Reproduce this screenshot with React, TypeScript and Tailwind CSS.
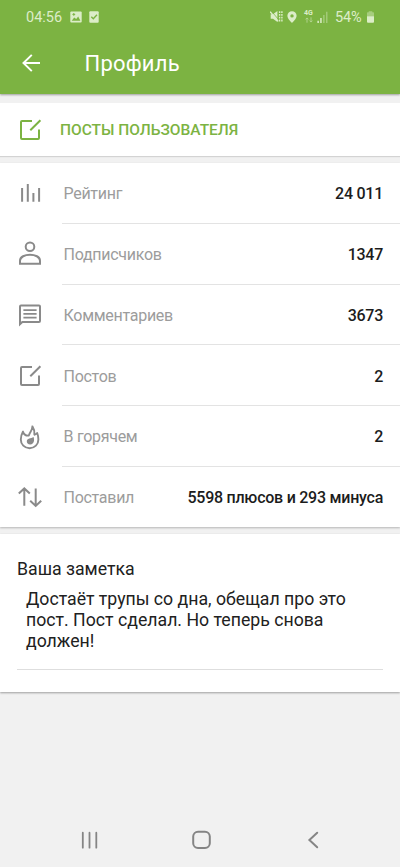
import type { ReactNode } from "react";

function Icon({ children }: { children: ReactNode }) {
  return (
    <svg
      className="h-7 w-7 shrink-0"
      viewBox="0 0 28 28"
      fill="none"
      stroke="currentColor"
      strokeWidth="2"
    >
      {children}
    </svg>
  );
}

const EditIcon = () => (
  <Icon>
    <path d="M16 5H6Q5 5 5 6v16q0 1 1 1h16q1 0 1-1v-8.6M24.4 4.2 14.3 14.2" />
  </Icon>
);

const BarsIcon = () => (
  <Icon>
    <path d="M6.1 9v13.7M11.8 5v17.7M17.4 14v8.7M23.1 9v13.7" />
  </Icon>
);

const PersonIcon = () => (
  <Icon>
    <circle cx="14" cy="6.8" r="4.3" />
    <path d="M4 23.7v-2.9c0-4 5-6.1 10-6.1s10 2.1 10 6.1v2.9z" />
  </Icon>
);

const CommentIcon = () => (
  <Icon>
    <path d="M4 23.2V5.6Q4 4.6 5 4.6h18q1 0 1 1V20q0 1-1 1H6.3z" />
    <path d="M7.4 9.2h13.2M7.4 12.9h13.2M7.4 16.6h13.2" strokeWidth="1.8" />
  </Icon>
);

const FireIcon = () => (
  <Icon>
    <path
      d="M16.4 3.4c0 4-2.6 5.4-3.6 9.2-2.6.2-5-1.200-5.900-4C5.400 11.500 4.800 14.200 4.800 16.500c0 4.900 3.700 8.700 8.800 8.700s8.800-3.800 8.800-8.700c0-2.500-.4-4.500-1.200-6.500-.8 1-1.700 1.500-2.800 1.700.2-3-.3-5.800-2-8.300z"
      strokeLinejoin="round"
      strokeWidth="1.9"
    />
    <path
      d="M17.6 14c1 3.300.5 7.200-3.200 7.400-2.300.1-3.700-1.200-3.600-3.100.1-3.100 4.200-2.600 6.800-4.300z"
      fill="currentColor"
      stroke="none"
    />
  </Icon>
);

const ArrowsIcon = () => (
  <Icon>
    <path d="M8.3 22.8V5.8M2.8 10.6l5.5-5.2 5.5 5.2M19.7 5.5v17M14.2 17.7l5.5 5.2 5.5-5.2" />
  </Icon>
);

const stats = [
  { icon: <BarsIcon />, label: "Рейтинг", value: "24 011" },
  { icon: <PersonIcon />, label: "Подписчиков", value: "1347" },
  { icon: <CommentIcon />, label: "Комментариев", value: "3673" },
  { icon: <EditIcon />, label: "Постов", value: "2" },
  { icon: <FireIcon />, label: "В горячем", value: "2" },
  { icon: <ArrowsIcon />, label: "Поставил", value: "5598 плюсов и 293 минуса" },
];

function StatusBar() {
  return (
    <div className="flex h-[33px] items-center pl-[26px] pr-[25px] text-[14.5px] text-[#dcedc8]">
      <span className="pt-[2px]">04:56</span>
      <svg className="ml-[8px] h-3 w-3" viewBox="0 0 12 12">
        <rect x=".3" y=".5" width="11.4" height="11" rx="1" fill="currentColor" />
        <path d="M1.7 9.7 4.2 6.5l2 1.6 2-2.7 2.2 4.3z" fill="#7cb342" />
        <path d="M3.8 2v2.8M2.4 3.4h2.8" stroke="#7cb342" />
      </svg>
      <svg className="ml-[6px] h-3 w-3" viewBox="0 0 12 12">
        <rect x="1.3" y=".2" width="9.4" height="11.6" rx="1" fill="currentColor" />
        <path d="m3.3 5.8 2 2 3.7-4" fill="none" stroke="#7cb342" strokeWidth="1.4" />
      </svg>
      <div className="ml-auto flex items-center">
        <svg className="h-[13px] w-[13px]" viewBox="0 0 13 13" fill="none" stroke="currentColor">
          <path d="M.7 4.2h2.2L7.4 1v11L3 8.7H.7z" fill="currentColor" stroke="none" />
          <path d="m1.2 1 7.6 8.8" stroke="#7cb342" strokeWidth=".8" />
          <path d="m.2 1.7 8 9.6" strokeWidth="1.3" />
          <path d="M9.6 1.2v11M11.9 1.2v11" strokeWidth="1.4" strokeDasharray="1.8 1" />
        </svg>
        <svg className="ml-1 h-3 w-[10px]" viewBox="0 0 10 12">
          <path
            d="M5 .2A4.6 4.6 0 0 0 .4 4.8C.4 8 5 12 5 12s4.6-4 4.6-7.2A4.6 4.6 0 0 0 5 .2zm0 3a1.7 1.7 0 1 1 0 3.4 1.7 1.7 0 0 1 0-3.4z"
            fill="currentColor"
          />
        </svg>
        <div className="ml-[7px] flex w-[9px] flex-col items-center">
          <span className="text-[7px] font-bold leading-[7px]">4G</span>
          <svg className="h-[6px] w-2 opacity-60" viewBox="0 0 8 6" fill="none" stroke="currentColor" strokeWidth=".9">
            <path d="M2 5.7V1M.5 2.4 2 .9l1.5 1.5M6 .3V5M4.5 3.6 6 5.1l1.5-1.5" />
          </svg>
        </div>
        <svg className="ml-1 h-3 w-[11px]" viewBox="0 0 11 12" fill="currentColor">
          <path d="M.4 9.8h1.5V12H.4zM3.2 7h1.5v5H3.2z" />
          <path d="M6.1 4h1.5v8H6.1zM9 .8h1.5V12H9z" opacity=".4" />
        </svg>
        <span className="ml-[7px] w-[28px] pt-[2px] tracking-[-0.2px]">54%</span>
        <svg className="ml-[3px] h-3 w-[9px]" viewBox="0 0 9 12" fill="currentColor">
          <path d="M1 5.5V2q0-.7.7-.7h1V.3h3.6v1h1q.7 0 .7.7v3.5z" opacity=".45" />
          <path d="M1 5.2h7v5.5q0 1-1 1H2q-1 0-1-1z" />
        </svg>
      </div>
    </div>
  );
}

export default function App() {
  return (
    <div className="flex h-[867px] w-[400px] flex-col overflow-hidden bg-[#f1f1f1] font-[Roboto,sans-serif]">
      <header className="h-[94px] shrink-0 bg-[#7cb342] shadow-[0_1px_2px_rgba(0,0,0,0.35)]">
        <StatusBar />
        <div className="flex h-[60px] items-center pl-[21px] text-white">
          <svg className="h-5 w-5" viewBox="0 0 20 20" fill="none" stroke="currentColor" strokeWidth="2">
            <path d="M19 10H2.5M10.8 1.9 2.5 10l8.3 8.1" />
          </svg>
          <h1 className="ml-[43.5px] pt-px text-[22px] leading-[30px] tracking-[0.2px]">Профиль</h1>
        </div>
      </header>

      <section className="mt-[9px] flex h-[53px] shrink-0 items-center bg-white pl-4 text-[#7cb342] shadow-[0_1px_1px_rgba(0,0,0,0.12)]">
        <EditIcon />
        <span className="ml-4 pt-[2px] text-[15.5px] font-medium">ПОСТЫ ПОЛЬЗОВАТЕЛЯ</span>
      </section>

      <section className="mt-[7px] h-[364px] shrink-0 bg-white pl-4 shadow-[0_1px_2px_rgba(0,0,0,0.25)]">
        {stats.map((s) => (
          <div key={s.label} className="group flex h-[60.8px] items-center text-[#8a8a8a]">
            {s.icon}
            <div className="ml-[18px] flex h-full flex-1 items-center justify-between border-b border-[#e3e3e3] pl-[1.5px] pr-[17px] pt-[2.5px] text-[16px] group-last:border-transparent">
              <span className="tracking-[-0.28px] text-[#9c9c9c]">{s.label}</span>
              <span className="font-medium tracking-[-0.25px] text-[#1c1c1c]">{s.value}</span>
            </div>
          </div>
        ))}
      </section>

      <section className="mt-[7px] h-[158px] shrink-0 bg-white px-[17px] pt-[23px] text-[#212121] shadow-[0_1px_2px_rgba(0,0,0,0.35)]">
        <h2 className="text-[17.7px] leading-6">Ваша заметка</h2>
        <p className="mt-[7px] h-[82px] whitespace-nowrap border-b border-[#dedede] pl-[9px] pt-px text-[17.7px] leading-[21px]">
          Достаёт трупы со дна, обещал про это
          <br />
          пост. Пост сделал. Но теперь снова
          <br />
          должен!
        </p>
      </section>

      <nav className="mt-auto flex h-[54px] items-center justify-between pl-[80px] pr-[77px] text-[#858585]">
        <svg className="h-5 w-5" viewBox="0 0 20 20" stroke="currentColor" strokeWidth="1.8" strokeLinecap="round">
          <path d="M2.8 2.7v15M9.5 2.7v15M16.3 2.7v15" />
        </svg>
        <svg className="h-5 w-5" viewBox="0 0 20 20" fill="none" stroke="currentColor" strokeWidth="2">
          <rect x="1.2" y="1.8" width="16.6" height="16.2" rx="4.8" />
        </svg>
        <svg className="h-5 w-5" viewBox="0 0 20 20" fill="none" stroke="currentColor" strokeWidth="2" strokeLinecap="round">
          <path d="M14.2 2.8 6.4 10l7.8 7.2" />
        </svg>
      </nav>
    </div>
  );
}
